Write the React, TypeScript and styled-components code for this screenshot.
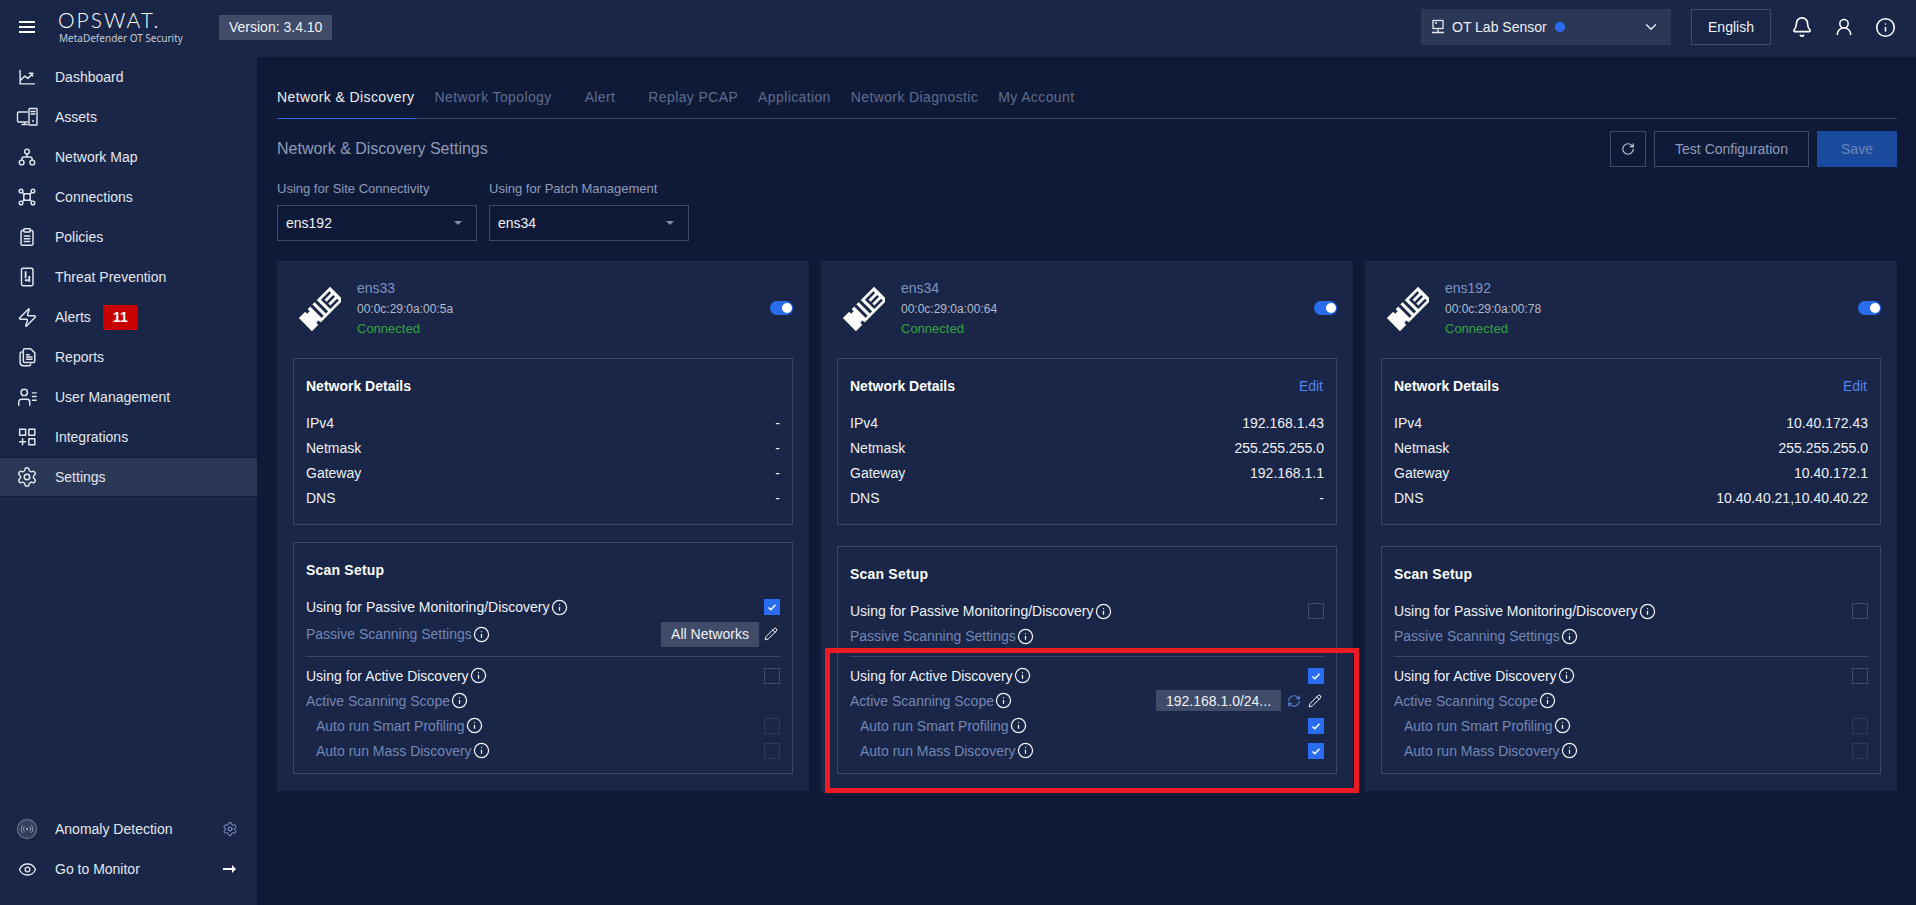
import React from "react";
import styled, { createGlobalStyle } from "styled-components";
import { Bell, ChevronDown, Eye, Info, Pencil, RefreshCw, RotateCw, Settings, UserRound, Zap } from "lucide-react";

const Global = createGlobalStyle`
  html, body { margin: 0; padding: 0; height: 100%; background: #0f1a38; }
  #root { height: 100%; }
  * { box-sizing: border-box; }
`;

const Page = styled.div`
  position: relative;
  width: 100%;
  height: 905px;
  overflow: hidden;
  display: flex;
  flex-direction: column;
  font-family: "Liberation Sans", Arial, sans-serif;
  font-size: 14px;
  color: #e6e9f0;
  background: #0f1a38;
`;

const TopBar = styled.header`
  height: 57px;
  flex: none;
  display: flex;
  align-items: center;
  background: #192648;
  padding: 0 20px 3px 19px;
`;
const Burger = styled.div`
  width: 16px;
  height: 12px;
  margin-right: 23px;
  border-top: 2px solid #fff;
  border-bottom: 2px solid #fff;
  &::after {
    content: "";
    display: block;
    margin-top: 3px;
    height: 2px;
    background: #fff;
  }
`;
const Logo = styled.div`
  width: 161px;
  display: flex;
  flex-direction: column;
  margin-top: -1px;
`;
const LogoMark = styled.span`
  font-family: Lato, sans-serif;
  font-weight: 300;
  font-size: 21px;
  line-height: 22px;
  letter-spacing: 2px;
  color: #fff;
`;
const LogoSub = styled.span`
  font-family: "Noto Sans", sans-serif;
  font-size: 10px;
  line-height: 14px;
  color: #c4c9d6;
  margin-left: 1px;
  white-space: nowrap;
`;
const Version = styled.div`
  height: 25px;
  padding: 0 10px;
  display: flex;
  align-items: center;
  background: #3f4b69;
  color: #f0f2f6;
`;
const Spacer = styled.div`
  flex: 1;
`;
const SensorSelect = styled.div`
  width: 250px;
  height: 36px;
  display: flex;
  align-items: center;
  padding: 0 11px 0 10px;
  background: #2b3757;
  color: #eef0f5;
`;
const SensorName = styled.span`
  margin-left: 7px;
`;
const SensorDot = styled.span`
  width: 10px;
  height: 10px;
  border-radius: 50%;
  margin-left: 8px;
  background: #2a6cf0;
`;
const LangButton = styled.div`
  width: 80px;
  height: 36px;
  margin-left: 20px;
  display: flex;
  align-items: center;
  justify-content: center;
  border: 1px solid #3f4b69;
  color: #eef0f5;
`;
const TopIcons = styled.div`
  display: flex;
  align-items: center;
  margin-left: 20px;
  gap: 21px;
  color: #fff;
`;

const Body = styled.div`
  flex: 1;
  display: flex;
  min-height: 0;
`;
const Sidebar = styled.aside`
  width: 257px;
  flex: none;
  display: flex;
  flex-direction: column;
  justify-content: space-between;
  padding-bottom: 16px;
  background: #192648;
`;
const NavItem = styled.div<{ $active?: boolean }>`
  height: 40px;
  display: flex;
  align-items: center;
  padding: 0 16px 0 15px;
  color: #e3e6ee;
  background: ${(p) => (p.$active ? "#2b3757" : "transparent")};
  border-top: 1px solid ${(p) => (p.$active ? "#121c3a" : "transparent")};
  border-bottom: 1px solid ${(p) => (p.$active ? "#121c3a" : "transparent")};
`;
const NavIcon = styled.span`
  width: 24px;
  height: 24px;
  flex: none;
  margin-right: 16px;
  display: flex;
  align-items: center;
  justify-content: center;
  color: #e3e6ee;
`;
const AlertCount = styled.span`
  width: 35px;
  height: 25px;
  margin-left: 12px;
  display: flex;
  align-items: center;
  justify-content: center;
  background: #c80000;
  color: #fff;
  font-weight: 700;
`;
const NavEnd = styled.span<{ $right: number }>`
  margin-left: auto;
  margin-right: ${(p) => p.$right}px;
  width: 16px;
  display: flex;
  align-items: center;
  justify-content: center;
  color: #8ea0cf;
`;

const Main = styled.main`
  flex: 1;
  min-width: 0;
  padding: 22px 19px 0 20px;
`;
const TabStrip = styled.nav`
  display: flex;
  height: 40px;
  gap: 20px;
  border-bottom: 1px solid #3a4665;
`;
const Tab = styled.div<{ $active?: boolean; $pad?: number }>`
  height: 40px;
  display: flex;
  align-items: center;
  padding: 0 ${(p) => p.$pad ?? 0}px 4px;
  letter-spacing: ${(p) => (p.$active ? 0.4 : 0.38)}px;
  color: ${(p) => (p.$active ? "#eef0f5" : "#5f6c8e")};
  border-bottom: 1px solid ${(p) => (p.$active ? "#2a6cf0" : "transparent")};
  white-space: nowrap;
`;
const TitleRow = styled.div`
  display: flex;
  align-items: center;
  gap: 8px;
  height: 36px;
  margin-top: 12px;
`;
const PageTitle = styled.h1`
  flex: 1;
  margin: 0;
  font-size: 16px;
  font-weight: 400;
  color: #8e9ab8;
`;
const OutlineButton = styled.div<{ $w: number }>`
  width: ${(p) => p.$w}px;
  height: 36px;
  display: flex;
  align-items: center;
  justify-content: center;
  border: 1px solid #3f4b69;
  color: #8e9ab8;
`;
const SaveButton = styled.div`
  width: 80px;
  height: 36px;
  display: flex;
  align-items: center;
  justify-content: center;
  background: #1a4a9e;
  color: #6e84b4;
`;
const SelectRow = styled.div`
  display: flex;
  gap: 12px;
  margin-top: 14px;
`;
const Field = styled.div`
  width: 200px;
  display: flex;
  flex-direction: column;
  gap: 8px;
`;
const FieldLabel = styled.label`
  font-size: 13px;
  line-height: 16px;
  color: #8e9ab8;
`;
const SelectBox = styled.div`
  height: 36px;
  display: flex;
  align-items: center;
  justify-content: space-between;
  padding: 0 14px 0 8px;
  border: 1px solid #3f4b69;
  color: #f0f2f6;
`;
const Caret = styled.span`
  width: 0;
  height: 0;
  border-left: 4px solid transparent;
  border-right: 4px solid transparent;
  border-top: 4px solid #7f8aa8;
`;
const Cards = styled.section`
  display: grid;
  grid-template-columns: repeat(3, 1fr);
  gap: 12px;
  margin-top: 20px;
`;
const Card = styled.article`
  display: flex;
  flex-direction: column;
  padding: 16px 16px 17px;
  background: #192648;
`;
const CardHead = styled.div`
  height: 81px;
  display: flex;
  align-items: flex-start;
  padding-left: 6px;
`;
const PlugBox = styled.div`
  width: 42px;
  height: 44px;
  margin: 10px 16px 0 0;
  flex: none;
`;
const HeadText = styled.div`
  flex: 1;
  display: flex;
  flex-direction: column;
`;
const IfName = styled.div`
  font-size: 14px;
  line-height: 22px;
  color: #7f92c4;
`;
const Mac = styled.div`
  font-size: 12px;
  line-height: 21px;
  color: #b4bac9;
`;
const Status = styled.div`
  font-size: 13px;
  line-height: 18px;
  color: #36a343;
`;
const Toggle = styled.div`
  width: 23px;
  height: 14px;
  margin-top: 24px;
  border-radius: 7px;
  background: #2a6cf0;
  position: relative;
  &::after {
    content: "";
    position: absolute;
    top: 2px;
    right: 1px;
    width: 10px;
    height: 10px;
    border-radius: 50%;
    background: #fff;
  }
`;
const Details = styled.div`
  border: 1px solid #3a4665;
  padding: 14px 12px 14px;
  margin-bottom: 17px;
`;
const BoxTitleRow = styled.div`
  height: 26px;
  display: flex;
  align-items: center;
  justify-content: space-between;
  margin-bottom: 11px;
`;
const BoxTitle = styled.h3`
  margin: 0;
  font-size: 14px;
  font-weight: 700;
  color: #fff;
`;
const EditLink = styled.a`
  color: #4f86f0;
  margin-right: 1px;
`;
const DetailRow = styled.div`
  height: 25px;
  display: flex;
  align-items: center;
  justify-content: space-between;
  color: #eef0f5;
`;
const Scan = styled.div`
  margin-top: auto;
  border: 1px solid #3a4665;
  padding: 15px 12px 10px 12px;
`;
const ScanTitle = styled(BoxTitle)`
  height: 24px;
  line-height: 24px;
  margin-bottom: 13px;
  letter-spacing: 0.2px;
`;
const TopRow = styled.div`
  height: 24px;
  display: flex;
  align-items: center;
`;
const SubRow = styled.div<{ $tall?: boolean }>`
  height: ${(p) => (p.$tall ? 30 : 26)}px;
  display: flex;
  align-items: center;
`;
const Divider = styled.hr`
  margin: 7px 0 6px;
  border: 0;
  border-top: 1px solid #3a4665;
`;
const ScanRow = styled.div<{ $indent?: boolean }>`
  height: 25px;
  display: flex;
  align-items: center;
  padding-left: ${(p) => (p.$indent ? 10 : 0)}px;
`;
const RowLabel = styled.span<{ $primary?: boolean }>`
  color: ${(p) => (p.$primary ? "#f0f2f6" : "#7386b6")};
  white-space: nowrap;
`;
const InfoWrap = styled.span`
  display: inline-flex;
  margin-left: 1px;
  color: #f0f2f6;
`;
const RowEnd = styled.div`
  margin-left: auto;
  display: flex;
  align-items: center;
`;
const Check = styled.span<{ $on?: boolean; $dim?: boolean }>`
  width: 16px;
  height: 16px;
  display: flex;
  align-items: center;
  justify-content: center;
  background: ${(p) => (p.$on ? "#2a6cf0" : "transparent")};
  border: ${(p) => (p.$on ? "none" : `1px solid ${p.$dim ? "#2d3958" : "#3f4b69"}`)};
`;
const NetBadge = styled.span<{ $h: number; $w: number }>`
  width: ${(p) => p.$w}px;
  height: ${(p) => p.$h}px;
  display: flex;
  align-items: center;
  justify-content: center;
  background: #3f4b69;
  color: #f0f2f6;
`;
const IconAction = styled.span<{ $blue?: boolean; $left: number }>`
  display: flex;
  margin-left: ${(p) => p.$left}px;
  margin-right: 2px;
  color: ${(p) => (p.$blue ? "#5c88dc" : "#fff")};
`;
const Highlight = styled.div`
  position: absolute;
  left: 825px;
  top: 648px;
  width: 534px;
  height: 145px;
  border: 5px solid #ed1c24;
  pointer-events: none;
`;

const S = { fill: "none", stroke: "currentColor", strokeWidth: 1.6, strokeLinecap: "round" as const, strokeLinejoin: "round" as const };
const Svg: React.FC<{ children: React.ReactNode }> = ({ children }) => (
  <svg width={22} height={22} viewBox="0 0 24 24" {...S}>{children}</svg>
);

const icons: Record<string, React.ReactNode> = {
  dashboard: (
    <Svg><path d="M4.500 5v14.500h15.500M4.500 16l5-5 3.500 2.500 5.500-5.500M14.500 8H18v3" /></Svg>
  ),
  assets: (
    <svg width="24" height="24" viewBox="0 0 24 24" {...S} strokeWidth={1.4}>
      <path d="M12.500 7H3.500a1 1 0 0 0-1 1v8a1 1 0 0 0 1 1h9M7 19.500h5.500M9.500 17v2.500" />
      <rect x="14" y="3.500" width="8" height="16.500" rx=".6" />
      <path d="M16 6.500h4M16 9h4M18 15.500v1" />
    </svg>
  ),
  map: (
    <Svg>
      <circle cx="12" cy="6" r="2.600" /><circle cx="6.200" cy="18" r="2.600" /><circle cx="17.800" cy="18" r="2.600" />
      <path d="M12 8.600V12M6.200 15.400c0-2 .8-3.400 2.500-3.400h6.600c1.700 0 2.500 1.400 2.500 3.400" />
    </Svg>
  ),
  connections: (
    <Svg>
      <circle cx="5.500" cy="5.500" r="2" /><circle cx="18.500" cy="5.500" r="2" /><circle cx="5.500" cy="18.500" r="2" /><circle cx="18.500" cy="18.500" r="2" />
      <path d="M7 7l2 2M17 7l-2 2M7 17l2-2M17 17l-2-2" /><rect x="8.500" y="8.500" width="7" height="7" />
    </Svg>
  ),
  policies: (
    <Svg>
      <path d="M8.500 5H7a1.500 1.500 0 0 0-1.500 1.500v13A1.500 1.500 0 0 0 7 21h10a1.500 1.500 0 0 0 1.500-1.500v-13A1.500 1.500 0 0 0 17 5h-1.500" />
      <rect x="8.500" y="3" width="7" height="3.500" rx=".8" /><path d="M9 11h6M9 14h6M9 17h6" />
    </Svg>
  ),
  threat: (
    <Svg>
      <rect x="6" y="2.500" width="12.500" height="19" rx="1.500" />
      <path d="M10.500 6.500v6M10.500 15.500h2M14.500 11.500v5" strokeWidth={2} />
    </Svg>
  ),
  alerts: <Zap size={21} strokeWidth={1.7} />,
  reports: (
    <Svg>
      <path d="M8 4.500h6.500l4.500 4.500v9a1.500 1.500 0 0 1-1.500 1.500H8A1.500 1.500 0 0 1 6.500 18V6A1.500 1.500 0 0 1 8 4.500z" transform="translate(1.500 -1.500)" />
      <path d="M6.500 6.500C5 6.500 4.500 7.500 4.500 8.500v9.500c0 2 1.500 3.500 3.500 3.500h6c1 0 1.800-.5 2-1.500M11.500 12h6M11.500 14.500h6M11.500 9.500h3" />
    </Svg>
  ),
  users: (
    <Svg>
      <circle cx="9" cy="7" r="3.500" /><path d="M3 21v-3.500A3 3 0 0 1 6 14.500h6a3 3 0 0 1 3 3V21M18 7.500h4M18 11.500h4M18 15.500h4" />
    </Svg>
  ),
  integrations: (
    <Svg>
      <rect x="4" y="3.500" width="6.500" height="6.500" /><rect x="14" y="3.500" width="6.500" height="6.500" /><rect x="14" y="14" width="6.500" height="6.500" />
      <path d="M7.200 14v6.500M4 17.200h6.500" />
    </Svg>
  ),
  settings: <Settings size={22} strokeWidth={1.6} />,
  eye: <Eye size={19} strokeWidth={1.7} />,
  anomaly: (
    <svg width="22" height="22" viewBox="0 0 22 22" fill="none" stroke="#8b93a8" strokeWidth="1" style={{ flex: "none" }}>
      <circle cx="11" cy="11" r="9.500" fill="#333e5c" strokeWidth="1.400" stroke="#5f6981" />
      <circle cx="11" cy="11" r="1" fill="#c4c9d6" stroke="none" />
      <path d="M8.500 8.500a3.500 3.500 0 0 0 0 5M13.500 8.500a3.500 3.500 0 0 1 0 5M6.800 7a6 6 0 0 0 0 8M15.200 7a6 6 0 0 1 0 8" />
    </svg>
  ),
};

const navItems = [
  ["dashboard", "Dashboard"],
  ["assets", "Assets"],
  ["map", "Network Map"],
  ["connections", "Connections"],
  ["policies", "Policies"],
  ["threat", "Threat Prevention"],
  ["alerts", "Alerts"],
  ["reports", "Reports"],
  ["users", "User Management"],
  ["integrations", "Integrations"],
  ["settings", "Settings"],
];

const Plug = () => (
  <PlugBox>
    <svg width="42" height="44" viewBox="0 0 42 44">
      <g transform="translate(21 23) rotate(45) scale(.95)">
        <path fill="#fff" stroke="#fff" strokeWidth="1.500" strokeLinejoin="round" d="M-9-24H9V8H6v5h3v8H-9v-8h3V8h-3z" />
        <path fill="#192648" d="M-7-11H7v2.600H-7zM-7-21h2.600v10H-7zM-1.300-21H1.300v10H-1.300zM4.400-21H7v10H4.400zM-10-5H7v3.200H-10zM-10 1.500H7v3.200H-10z" />
      </g>
    </svg>
  </PlugBox>
);

const InfoIcon = () => (
  <InfoWrap><Info size={17} strokeWidth={1.8} /></InfoWrap>
);
const CheckBox: React.FC<{ on?: boolean; dim?: boolean }> = ({ on, dim }) => (
  <Check $on={on} $dim={dim}>
    {on && (
      <svg width="10" height="10" viewBox="0 0 10 10" fill="none" stroke="#fff" strokeWidth="1.500">
        <path d="M1.500 5.500l2.300 2.200 4.700-5" />
      </svg>
    )}
  </Check>
);

type Iface = {
  name: string; mac: string; edit: boolean;
  details: [string, string, string, string];
  passive: boolean; active: boolean;
};
const ifaces: Iface[] = [
  { name: "ens33", mac: "00:0c:29:0a:00:5a", edit: false, details: ["-", "-", "-", "-"], passive: true, active: false },
  { name: "ens34", mac: "00:0c:29:0a:00:64", edit: true, details: ["192.168.1.43", "255.255.255.0", "192.168.1.1", "-"], passive: false, active: true },
  { name: "ens192", mac: "00:0c:29:0a:00:78", edit: true, details: ["10.40.172.43", "255.255.255.0", "10.40.172.1", "10.40.40.21,10.40.40.22"], passive: false, active: false },
];
const detailLabels = ["IPv4", "Netmask", "Gateway", "DNS"];

const InterfaceCard: React.FC<{ d: Iface }> = ({ d }) => (
  <Card>
    <CardHead>
      <Plug />
      <HeadText>
        <IfName>{d.name}</IfName>
        <Mac>{d.mac}</Mac>
        <Status>Connected</Status>
      </HeadText>
      <Toggle />
    </CardHead>
    <Details>
      <BoxTitleRow>
        <BoxTitle>Network Details</BoxTitle>
        {d.edit && <EditLink>Edit</EditLink>}
      </BoxTitleRow>
      {detailLabels.map((l, i) => (
        <DetailRow key={l}><span>{l}</span><span>{d.details[i]}</span></DetailRow>
      ))}
    </Details>
    <Scan>
      <ScanTitle>Scan Setup</ScanTitle>
      <TopRow>
        <RowLabel $primary>Using for Passive Monitoring/Discovery</RowLabel><InfoIcon />
        <RowEnd><CheckBox on={d.passive} /></RowEnd>
      </TopRow>
      <SubRow $tall={d.passive}>
        <RowLabel>Passive Scanning Settings</RowLabel><InfoIcon />
        {d.passive && (
          <RowEnd>
            <NetBadge $w={98} $h={25}>All Networks</NetBadge>
            <IconAction $left={5}><Pencil size={14} strokeWidth={1.7} /></IconAction>
          </RowEnd>
        )}
      </SubRow>
      <Divider />
      <ScanRow>
        <RowLabel $primary>Using for Active Discovery</RowLabel><InfoIcon />
        <RowEnd><CheckBox on={d.active} /></RowEnd>
      </ScanRow>
      <ScanRow>
        <RowLabel>Active Scanning Scope</RowLabel><InfoIcon />
        {d.active && (
          <RowEnd>
            <NetBadge $w={125} $h={21}>192.168.1.0/24...</NetBadge>
            <IconAction $blue $left={6}><RefreshCw size={14} strokeWidth={1.8} /></IconAction>
            <IconAction $left={5}><Pencil size={14} strokeWidth={1.7} /></IconAction>
          </RowEnd>
        )}
      </ScanRow>
      <ScanRow $indent>
        <RowLabel>Auto run Smart Profiling</RowLabel><InfoIcon />
        <RowEnd><CheckBox on={d.active} dim /></RowEnd>
      </ScanRow>
      <ScanRow $indent>
        <RowLabel>Auto run Mass Discovery</RowLabel><InfoIcon />
        <RowEnd><CheckBox on={d.active} dim /></RowEnd>
      </ScanRow>
    </Scan>
  </Card>
);

export default function App() {
  return (
    <Page>
      <Global />
      <TopBar>
        <Burger />
        <Logo>
          <LogoMark>OPSWAT.</LogoMark>
          <LogoSub>MetaDefender OT Security</LogoSub>
        </Logo>
        <Version>Version: 3.4.10</Version>
        <Spacer />
        <SensorSelect>
          <svg width="14" height="16" viewBox="0 0 14 16" fill="none" stroke="#e6e9f0" strokeWidth="1.300">
            <rect x="2" y="1.500" width="10" height="8" /><path d="M4 4h2M7 9.500v4M1 13.500h12" />
          </svg>
          <SensorName>OT Lab Sensor</SensorName>
          <SensorDot />
          <Spacer />
          <ChevronDown size={18} strokeWidth={1.7} />
        </SensorSelect>
        <LangButton>English</LangButton>
        <TopIcons>
          <Bell size={22} strokeWidth={1.8} />
          <UserRound size={20} strokeWidth={1.8} />
          <Info size={21} strokeWidth={1.8} />
        </TopIcons>
      </TopBar>
      <Body>
        <Sidebar>
          <nav>
            {navItems.map(([k, label]) => (
              <NavItem key={k} $active={k === "settings"}>
                <NavIcon>{icons[k]}</NavIcon>
                {label}
                {k === "alerts" && <AlertCount>11</AlertCount>}
              </NavItem>
            ))}
          </nav>
          <div>
            <NavItem>
              <NavIcon>{icons.anomaly}</NavIcon>
              Anomaly Detection
              <NavEnd $right={3}><Settings size={16} strokeWidth={1.5} /></NavEnd>
            </NavItem>
            <NavItem>
              <NavIcon>{icons.eye}</NavIcon>
              Go to Monitor
              <NavEnd $right={4}>
                <svg width="13" height="8" viewBox="0 0 13 8" fill="#fff"><path d="M0 3h9V0l4 4-4 4V5H0z" /></svg>
              </NavEnd>
            </NavItem>
          </div>
        </Sidebar>
        <Main>
          <TabStrip>
            <Tab $active>Network &amp; Discovery</Tab>
            <Tab>Network Topology</Tab>
            <Tab $pad={13}>Alert</Tab>
            <Tab>Replay PCAP</Tab>
            <Tab>Application</Tab>
            <Tab>Network Diagnostic</Tab>
            <Tab>My Account</Tab>
          </TabStrip>
          <TitleRow>
            <PageTitle>Network &amp; Discovery Settings</PageTitle>
            <OutlineButton $w={36}><RotateCw size={14} strokeWidth={2} color="#c4c9d6" /></OutlineButton>
            <OutlineButton $w={155}>Test Configuration</OutlineButton>
            <SaveButton>Save</SaveButton>
          </TitleRow>
          <SelectRow>
            <Field>
              <FieldLabel>Using for Site Connectivity</FieldLabel>
              <SelectBox>ens192<Caret /></SelectBox>
            </Field>
            <Field>
              <FieldLabel>Using for Patch Management</FieldLabel>
              <SelectBox>ens34<Caret /></SelectBox>
            </Field>
          </SelectRow>
          <Cards>
            {ifaces.map((d) => <InterfaceCard key={d.name} d={d} />)}
          </Cards>
        </Main>
      </Body>
      <Highlight />
    </Page>
  );
}
